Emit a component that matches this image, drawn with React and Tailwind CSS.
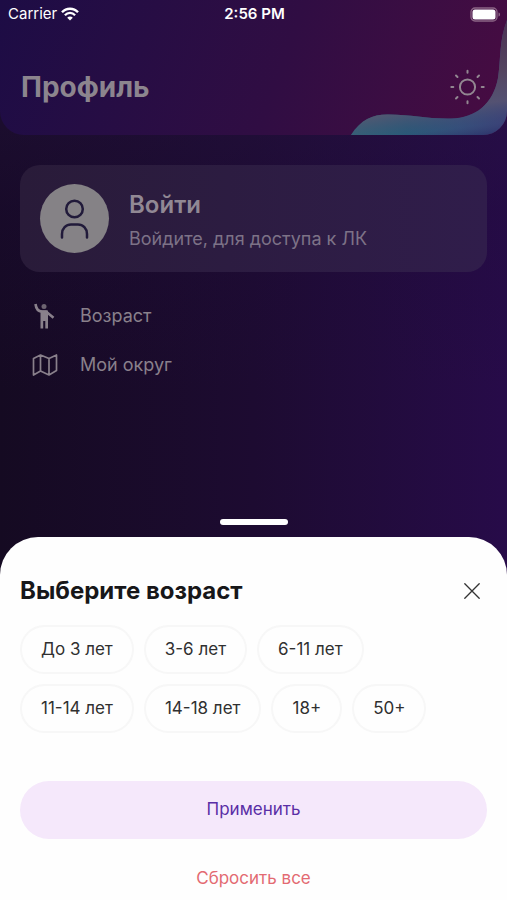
import { useState } from "react";

const AGES = ["До 3 лет", "3-6 лет", "6-11 лет", "11-14 лет", "14-18 лет", "18+", "50+"];

function WifiIcon() {
  return (
    <svg width="18" height="14" viewBox="0 0 18 14" fill="none" stroke="#fff" aria-hidden="true">
      <path d="M1 5.2C5.4.5 12.6.5 17 5.2" strokeWidth="2.4" />
      <path d="M3.9 8.2C6.8 5.2 11.2 5.2 14.1 8.2" strokeWidth="2.3" />
      <path d="M9 13.6 6.2 10.7C7.8 9.2 10.2 9.2 11.8 10.7Z" fill="#fff" stroke="none" />
    </svg>
  );
}

function BatteryIcon() {
  return (
    <svg width="31" height="15" viewBox="0 0 31 15" fill="none" aria-hidden="true">
      <rect x="1" y="1" width="26" height="13" rx="4" stroke="#8b6485" strokeWidth="1.3" />
      <rect x="2.500" y="2.500" width="23" height="10" rx="2.500" fill="#fff" />
      <path d="M28.5 5.5C30.6 6 30.6 9 28.5 9.5Z" fill="#8b6485" />
    </svg>
  );
}

function SunIcon() {
  return (
    <svg width="36" height="36" viewBox="0 0 36 36" fill="none" stroke="#928791" strokeWidth="2" strokeLinecap="round" aria-hidden="true">
      <circle cx="17.500" cy="18" r="7.6" />
      <path d="M17.500 1.8v2M17.500 32.2v2M1.300 18h2M31.700 18h2M6 6.5l1.5 1.5M27.500 28l1.5 1.5M6 29.5 7.500 28M27.500 8l1.5-1.5" />
    </svg>
  );
}

function Wave() {
  return (
    <svg className="absolute right-0 bottom-0" width="156" height="115" viewBox="0 0 156 115" aria-hidden="true">
      <defs>
        <linearGradient id="waveBase" x1="0" y1="0" x2="1" y2="0">
          <stop offset="0" stopColor="#2f6a78" />
          <stop offset=".35" stopColor="#265e78" />
          <stop offset=".7" stopColor="#34507c" />
          <stop offset="1" stopColor="#3c3f78" />
        </linearGradient>
        <linearGradient id="waveTop" gradientUnits="userSpaceOnUse" x1="128" y1="0" x2="142" y2="118">
          <stop offset="0" stopColor="#4a3052" />
          <stop offset=".45" stopColor="#544560" />
          <stop offset=".7" stopColor="#5a5570" stopOpacity=".8" />
          <stop offset=".88" stopColor="#3a4a76" stopOpacity=".25" />
          <stop offset="1" stopColor="#1a1a58" stopOpacity=".6" />
        </linearGradient>
      </defs>
      <path d="M0 115C10 99 23 94 38 94.500C61 94.500 76 99 100 98.500C125 98 142 84 147 58C150 38 148 21 156 0V115Z" fill="url(#waveBase)" />
      <path d="M0 115C10 99 23 94 38 94.500C61 94.500 76 99 100 98.500C125 98 142 84 147 58C150 38 148 21 156 0V115Z" fill="url(#waveTop)" />
    </svg>
  );
}

function PersonIcon() {
  return (
    <svg width="30" height="42" viewBox="0 0 30 42" fill="none" stroke="#211a3a" strokeWidth="2.5" strokeLinecap="round" aria-hidden="true">
      <circle cx="14.500" cy="11" r="8.300" />
      <path d="M2 39.500V36C2 30.500 6 26.500 11 26.500H18C23 26.500 27 30.500 27 36V39.500" />
    </svg>
  );
}

function WavingIcon() {
  return (
    <svg width="24" height="26" viewBox="0 0 24 26" fill="none" stroke="#89808b" aria-hidden="true">
      <circle cx="12" cy="3.500" r="2.500" fill="#6d6471" stroke="none" />
      <path d="M3.500 1C4 5.500 6 8.300 10 8.600H14L21.500 14.800" strokeWidth="2.600" strokeLinecap="butt" />
      <path d="M8.500 7.500H16V25.500H13.300V18H11.200V25.500H8.500Z" fill="#89808b" stroke="none" />
    </svg>
  );
}

function MapIcon() {
  return (
    <svg width="26" height="24" viewBox="0 0 26 24" fill="none" stroke="#89808b" strokeWidth="1.700" strokeLinejoin="round" aria-hidden="true">
      <path d="M1.500 5.500 8.500 2 17 5.500 24.500 2V17.500L17 22 8.500 18 1.500 22ZM8.500 2V18M17 5.500V22" />
    </svg>
  );
}

function CloseIcon() {
  return (
    <svg width="16" height="16" viewBox="0 0 16 16" fill="none" stroke="#333" strokeWidth="1.300" strokeLinecap="round" aria-hidden="true">
      <path d="M.8.8 15.200 15.200M15.200.8.8 15.200" />
    </svg>
  );
}

function MenuItem({ icon, children }) {
  return (
    <li>
      <button type="button" className="flex h-12 w-full items-center text-left text-lg text-[#89808b]">
        <span className="flex w-12 shrink-0">{icon}</span>
        {children}
      </button>
    </li>
  );
}

export default function App() {
  const [selected, setSelected] = useState([]);
  const toggle = (age) =>
    setSelected((list) => (list.includes(age) ? list.filter((a) => a !== age) : [...list, age]));

  return (
    <div className="flex min-h-screen flex-col bg-linear-to-r from-[#150a22] via-[#1d0b31] to-[#270b49] font-['Inter','Noto_Sans',sans-serif]">
      <div className="flex grow flex-col bg-linear-to-b from-[#2a1746]/50 via-[#200c3c]/30 via-40% to-transparent to-75%">
        <header className="relative overflow-hidden rounded-b-[24px] bg-linear-110 from-[#1d0c45] via-[#300d43] via-55% to-[#480b42] pb-[22px]">
          <Wave />
          <div className="relative grid h-7 grid-cols-3 items-center pr-1.5 pl-2 text-white">
            <span className="flex items-center gap-1 text-[15px]">
              Carrier <WifiIcon />
            </span>
            <time className="text-center text-[15px] font-semibold">2:56 PM</time>
            <span className="flex justify-end">
              <BatteryIcon />
            </span>
          </div>
          <div className="relative mt-[33px] flex items-center justify-between px-[21px]">
            <h1 className="text-[28px] leading-[52px] font-bold text-[#8c858e]">Профиль</h1>
            <button type="button" aria-label="Светлая тема">
              <SunIcon />
            </button>
          </div>
        </header>

        <main className="px-5 pt-[30px]">
          <button type="button" className="flex w-full items-center gap-5 rounded-[20px] bg-linear-to-r from-[#291b39] to-[#301d4b] px-5 py-[19px] text-left">
            <span className="flex size-[69px] shrink-0 items-center justify-center rounded-full bg-[#858286]">
              <PersonIcon />
            </span>
            <span className="flex flex-col gap-1 pt-1">
              <span className="text-2xl leading-8 font-semibold text-[#918894]">Войти</span>
              <span className="text-lg leading-7 text-[#7d7287]">Войдите, для доступа к ЛК</span>
            </span>
          </button>
          <ul className="mt-5 flex flex-col gap-px pl-3">
            <MenuItem icon={<WavingIcon />}>Возраст</MenuItem>
            <MenuItem icon={<MapIcon />}>Мой округ</MenuItem>
          </ul>
        </main>
      </div>

      <div className="mx-auto mt-auto mb-3 h-[6px] w-[68px] rounded-full bg-white" />
      <section role="dialog" aria-labelledby="sheet-title" className="rounded-t-[38px] bg-[#fefefe] px-5 pt-9">
        <div className="flex items-center justify-between">
          <h2 id="sheet-title" className="text-2xl leading-9 font-bold text-[#171719]">Выберите возраст</h2>
          <button type="button" aria-label="Закрыть" className="p-[7px]">
            <CloseIcon />
          </button>
        </div>
        <div className="mt-4 flex flex-wrap gap-[10px] pr-10">
          {AGES.map((age) => (
            <button
              key={age}
              type="button"
              aria-pressed={selected.includes(age)}
              onClick={() => toggle(age)}
              className="h-[49px] rounded-full border-2 border-[#f7f7f7] px-[19px] text-[17px] text-[#303030] aria-pressed:bg-[#f5e8fb]"
            >
              {age}
            </button>
          ))}
        </div>
        <button type="button" className="mt-12 h-[58px] w-full rounded-full bg-[#f5e8fb] text-[17px] text-[#5a2ea6]">
          Применить
        </button>
        <button type="button" onClick={() => setSelected([])} className="mt-5 mb-px h-10 w-full text-[17px] text-[#e36a72]">
          Сбросить все
        </button>
      </section>
    </div>
  );
}
